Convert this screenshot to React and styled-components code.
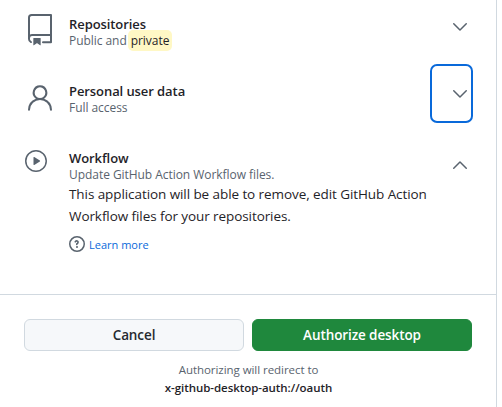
import React from "react";
import styled, { createGlobalStyle } from "styled-components";

const Global = createGlobalStyle`
  html, body { margin: 0; padding: 0; background: #fff; overflow: hidden; }
  body { font-family: "Open Sans", "Noto Sans", "Liberation Sans", sans-serif; color: #1f2328; }
`;

const Panel = styled.div`
  width: 497px;
  height: 407px;
  box-sizing: border-box;
  border-right: 1px solid #d1d9e0;
  display: flex;
  flex-direction: column;
`;
const List = styled.div`
  height: 294px;
  border-bottom: 1px solid #d1d9e0;
  box-sizing: content-box;
`;
const Row = styled.div`
  display: flex;
  align-items: flex-start;
  min-height: 67px;
  padding: ${(p) => p.$top}px 23px 0 ${(p) => p.$left}px;
  box-sizing: border-box;
`;
const IconSlot = styled.div`
  flex: none;
  margin-top: ${(p) => p.$top}px;
  margin-right: ${(p) => p.$gap}px;
  display: flex;
  color: #59636e;
`;
const Body = styled.div`
  flex: 1;
  min-width: 0;
`;
const Title = styled.div`
  font-size: 13px;
  font-weight: 600;
  line-height: 17px;
  letter-spacing: -0.08px;
  color: #1f2328;
`;
const Note = styled.div`
  font-size: 12px;
  line-height: 16px;
  letter-spacing: -0.05px;
  color: #59636e;
`;
const Mark = styled.span`
  background: #fff8c5;
  color: #1f2328;
  border-radius: 5px;
  padding: 2px 3px;
  margin-left: 1px;
`;
const Para = styled.p`
  margin: 0;
  font-size: 13.5px;
  line-height: 22px;
  letter-spacing: -0.08px;
  color: #1f2328;
`;
const Help = styled.div`
  display: flex;
  align-items: center;
  gap: 4px;
  margin-top: 9px;
  color: #59636e;
`;
const Learn = styled.a`
  font-size: 11px;
  letter-spacing: 0;
  color: #0969da;
  text-decoration: none;
`;
const Toggle = styled.button`
  flex: none;
  width: 43px;
  height: 59px;
  margin-top: ${(p) => p.$top}px;
  padding: 0 1px 0 0;
  box-sizing: border-box;
  display: flex;
  align-items: center;
  justify-content: flex-end;
  background: none;
  border: none;
  box-shadow: ${(p) => (p.$focus ? "inset 0 0 0 2px #0969da" : "none")};
  border-radius: 7px;
  color: #59636e;
`;
const Footer = styled.div`
  display: flex;
  flex-direction: column;
  padding: 24px 23px 0 24px;
`;
const Buttons = styled.div`
  display: grid;
  grid-template-columns: 220px 220px;
  column-gap: 8px;
`;
const Btn = styled.button`
  height: 32px;
  box-sizing: border-box;
  border-radius: 6px;
  font-family: inherit;
  font-size: 13.5px;
  font-weight: 600;
  letter-spacing: -0.1px;
  padding: 0;
  border: 1px solid ${(p) => (p.$primary ? "#1f883d" : "#d1d9e0")};
  background: ${(p) => (p.$primary ? "#1f883d" : "#f6f8fa")};
  color: ${(p) => (p.$primary ? "#fff" : "#25292e")};
`;
const Redirect = styled.div`
  margin-top: 10px;
  text-align: center;
  font-size: 11.5px;
  line-height: 18px;
  letter-spacing: -0.05px;
  color: #59636e;
`;
const Host = styled.div`
  font-weight: 600;
  color: #1f2328;
`;

const Icon = ({ size, box = 24, children }) => (
  <svg width={size} height={size} viewBox={`0 0 ${box} ${box}`} fill="currentColor">
    {children}
  </svg>
);
const Repo = () => (
  <Icon size={32}>
    <path d="M3 2.75A2.75 2.75 0 0 1 5.75 0h14.5a.75.75 0 0 1 .75.75v20.5a.75.75 0 0 1-.75.75h-6a.75.75 0 0 1 0-1.5h5.25v-4H6A1.5 1.5 0 0 0 4.5 18v.75c0 .716.43 1.334 1.05 1.605a.75.75 0 0 1-.6 1.374A3.251 3.251 0 0 1 3 18.75ZM19.5 1.5H5.75c-.69 0-1.25.56-1.25 1.25v12.651A2.989 2.989 0 0 1 6 15h13.5Z" />
    <path d="M7 18.25a.25.25 0 0 1 .25-.25h5a.25.25 0 0 1 .25.25v5.01a.25.25 0 0 1-.397.201l-2.206-1.604a.25.25 0 0 0-.294 0L7.397 23.46a.25.25 0 0 1-.397-.2Z" />
  </Icon>
);
const Person = () => (
  <Icon size={32}>
    <path d="M12 2.5a5.5 5.5 0 0 1 3.096 10.047 9.005 9.005 0 0 1 5.9 8.181.75.75 0 1 1-1.499.044 7.5 7.5 0 0 0-14.993 0 .75.75 0 0 1-1.5-.045 9.005 9.005 0 0 1 5.9-8.18A5.5 5.5 0 0 1 12 2.5ZM8 8a4 4 0 1 0 8 0 4 4 0 0 0-8 0Z" />
  </Icon>
);
const Play = () => (
  <Icon size={24}>
    <path d="M9.5 15.584V8.416a.5.5 0 0 1 .77-.42l5.576 3.583a.5.5 0 0 1 0 .842l-5.576 3.584a.5.5 0 0 1-.77-.42Z" />
    <path d="M12 1c6.075 0 11 4.925 11 11s-4.925 11-11 11S1 18.075 1 12 5.925 1 12 1ZM2.5 12a9.5 9.5 0 0 0 9.5 9.5 9.5 9.5 0 0 0 9.5-9.5A9.5 9.5 0 0 0 12 2.5 9.5 9.5 0 0 0 2.5 12Z" />
  </Icon>
);
const Down = () => (
  <Icon size={24}>
    <path d="M5.22 8.22a.749.749 0 0 0 0 1.06l6.25 6.25a.749.749 0 0 0 1.06 0l6.25-6.25a.749.749 0 1 0-1.06-1.06L12 13.939 6.28 8.22a.749.749 0 0 0-1.06 0Z" />
  </Icon>
);
const Up = () => (
  <Icon size={24}>
    <path d="M18.78 15.78a.749.749 0 0 1-1.06 0L12 10.061 6.28 15.78a.749.749 0 1 1-1.06-1.06l6.25-6.25a.749.749 0 0 1 1.06 0l6.25 6.25a.749.749 0 0 1 0 1.06Z" />
  </Icon>
);
const Question = () => (
  <Icon size={16} box={16}>
    <path d="M0 8a8 8 0 1 1 16 0A8 8 0 0 1 0 8Zm8-6.5a6.5 6.5 0 1 0 0 13 6.5 6.5 0 0 0 0-13ZM6.92 6.085h.001a.749.749 0 1 1-1.415-.49 2.25 2.25 0 0 1 4.279.003c.17.55.042 1.1-.227 1.547-.3.5-.76.877-1.058 1.05v.305a.75.75 0 0 1-1.5 0V8c0-.27.144-.518.378-.651.25-.143.54-.405.692-.659.078-.13.068-.206.056-.244A.75.75 0 0 0 8 5.5a.75.75 0 0 0-.7.49Zm1.08 5.915a1 1 0 1 1 0-2 1 1 0 0 1 0 2Z" />
  </Icon>
);

export default function App() {
  return (
    <Panel>
      <Global />
      <List>
        <Row $top={16} $left={24}>
          <IconSlot $top={-2} $gap={13}><Repo /></IconSlot>
          <Body>
            <Title>Repositories</Title>
            <Note>Public and<Mark>private</Mark></Note>
          </Body>
          <Toggle $top={-19} aria-label="Expand"><Down /></Toggle>
        </Row>
        <Row $top={16} $left={24}>
          <IconSlot $top={-1} $gap={13}><Person /></IconSlot>
          <Body>
            <Title>Personal user data</Title>
            <Note>Full access</Note>
          </Body>
          <Toggle $top={-19} $focus aria-label="Expand"><Down /></Toggle>
        </Row>
        <Row $top={16} $left={24}>
          <IconSlot $top={-1} $gap={21}><Play /></IconSlot>
          <Body>
            <Title>Workflow</Title>
            <Note>Update GitHub Action Workflow files.</Note>
            <Para>This application will be able to remove, edit GitHub Action Workflow files for your repositories.</Para>
            <Help><Question /><Learn href="#">Learn more</Learn></Help>
          </Body>
          <Toggle $top={-15} aria-label="Collapse"><Up /></Toggle>
        </Row>
      </List>
      <Footer>
        <Buttons>
          <Btn>Cancel</Btn>
          <Btn $primary>Authorize desktop</Btn>
        </Buttons>
        <Redirect>
          Authorizing will redirect to
          <Host>x-github-desktop-auth://oauth</Host>
        </Redirect>
      </Footer>
    </Panel>
  );
}
